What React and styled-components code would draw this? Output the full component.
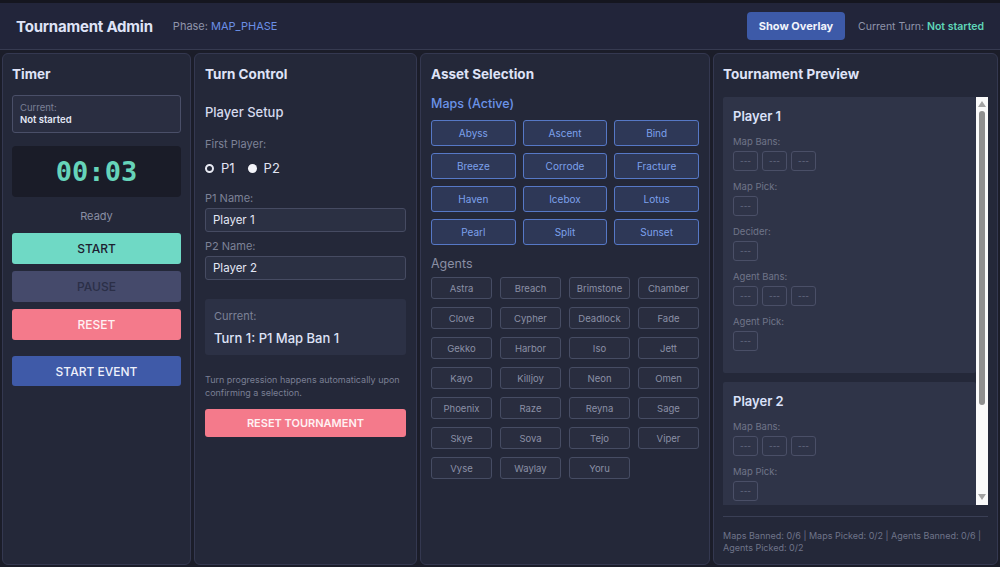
import React from "react";
import styled, { createGlobalStyle } from "styled-components";

const Global = createGlobalStyle`
  html, body { margin: 0; padding: 0; background: #1b1d29; }
  body { font-family: Inter, "Noto Sans", sans-serif; color: #dfe3f7; }
  #root { height: 567px; overflow: hidden; }
  * { box-sizing: border-box; }
`;

const Page = styled.div`
  height: 567px;
  display: flex;
  flex-direction: column;
  border-top: 3px solid #15161f;
`;

const Header = styled.header`
  height: 47px;
  flex: none;
  background: #22253a;
  border-bottom: 1px solid #363a50;
  display: flex;
  align-items: center;
  padding: 0 16px;
`;

const AppTitle = styled.h1`
  margin: 0;
  font-size: 15px;
  letter-spacing: -0.2px;
  font-weight: 700;
  color: #dfe3f7;
`;

const Meta = styled.div`
  font-size: ${(p) => p.$fs || 11}px;
  color: #8f94aa;
  margin-left: ${(p) => p.$ml || 0}px;
`;

const Accent = styled.span`
  color: ${(p) => p.$c};
  font-weight: ${(p) => p.$w || 400};
`;

const Spacer = styled.div`
  flex: 1;
`;

const OverlayButton = styled.button`
  height: 28px;
  width: 98px;
  padding: 0;
  border: none;
  border-radius: 4px;
  background: #3d5aa8;
  color: #f2f4fb;
  font-family: inherit;
  font-size: 11px;
  font-weight: 700;
  margin-right: 13px;
`;

const Grid = styled.main`
  flex: 1;
  display: grid;
  grid-template-columns: 189px 223px 290px 1fr;
  gap: 3px;
  padding: 3px 2px 2px;
  min-height: 0;
`;

const Panel = styled.section`
  background: #242839;
  border: 1px solid #343850;
  border-radius: 6px;
  padding: 12px ${(p) => p.$px || 9}px 6px;
  display: flex;
  flex-direction: column;
  min-height: 0;
  overflow: hidden;
`;

const PanelTitle = styled.h2`
  margin: 0;
  font-size: 13.5px;
  line-height: 17px;
  font-weight: 700;
  color: #dfe3f7;
`;

const CurrentBox = styled.div`
  margin-top: 12px;
  border: 1px solid #4a4f68;
  border-radius: 3px;
  background: #2a2e41;
  padding: 6px 7px;
  font-size: 9.5px;
  line-height: 12px;
`;

const SmallLabel = styled.div`
  color: #7b8096;
`;

const SmallValue = styled.div`
  color: #e4e7f5;
  font-weight: 600;
`;

const Clock = styled.div`
  margin-top: 13px;
  height: 51px;
  border-radius: 4px;
  background: #1a1c28;
  display: flex;
  align-items: center;
  justify-content: center;
  font-family: "DejaVu Sans Mono", monospace;
  font-weight: 700;
  font-size: 27px;
  color: #66d4ba;
`;

const Status = styled.div`
  margin-top: 12px;
  text-align: center;
  font-size: 11px;
  line-height: 14px;
  color: #8a8fa4;
`;

const ActionButton = styled.button`
  margin-top: ${(p) => p.$mt}px;
  height: ${(p) => p.$h || 31}px;
  width: 100%;
  border: none;
  border-radius: 3px;
  background: ${(p) => p.$bg};
  color: ${(p) => p.$fg};
  font-family: inherit;
  font-size: ${(p) => p.$fs || 12}px;
  font-weight: ${(p) => p.$fw || 500};
  flex: none;
`;

const SubTitle = styled.h3`
  margin: 21px 0 0;
  font-size: 13px;
  line-height: 17px;
  font-weight: 500;
  color: #d6daee;
`;

const FieldLabel = styled.div`
  margin-top: ${(p) => p.$mt}px;
  font-size: 11px;
  line-height: 14px;
  color: #7d8297;
`;

const RadioRow = styled.div`
  margin-top: 9px;
  display: flex;
  align-items: center;
  gap: 8px;
  height: 16px;
`;

const RadioOption = styled.label`
  display: flex;
  align-items: center;
  gap: 7px;
  font-size: 13px;
  color: #e1e4f4;
  margin-right: 5px;
`;

const RadioDot = styled.span`
  width: 9px;
  height: 9px;
  border-radius: 50%;
  background: ${(p) => (p.$on ? "#f4f5fa" : "#242839")};
  border: ${(p) => (p.$on ? "none" : "2px solid #e8eaf3")};
`;

const TextInput = styled.input`
  margin-top: 3px;
  width: 100%;
  height: 24px;
  background: #2b3043;
  border: 1px solid #464b62;
  border-radius: 3px;
  color: #e4e7f5;
  font-family: inherit;
  font-size: 11.5px;
  padding: 0 7px;
  outline: none;
`;

const TurnBox = styled.div`
  margin-top: 19px;
  height: 56px;
  background: #2c3145;
  border-radius: 3px;
  padding: 11px 9px;
`;

const TurnLabel = styled.div`
  font-size: 11px;
  line-height: 13px;
  color: #7d8297;
`;

const TurnValue = styled.div`
  margin-top: 7px;
  font-size: 13px;
  line-height: 16px;
  font-weight: 500;
  color: #dfe3f7;
`;

const Note = styled.p`
  margin: 18px 0 0;
  font-size: 9px;
  line-height: 13px;
  color: #7a7f94;
`;

const SectionLabel = styled.div`
  margin-top: ${(p) => p.$mt}px;
  font-size: 12.5px;
  line-height: 16px;
  color: ${(p) => p.$c};
  font-weight: ${(p) => p.$w || 400};
`;

const ChipGrid = styled.div`
  margin-top: ${(p) => p.$mt}px;
  display: grid;
  grid-template-columns: repeat(${(p) => p.$cols}, 1fr);
  gap: ${(p) => p.$gap}px ${(p) => p.$cgap}px;
`;

const MapChip = styled.button`
  height: 26px;
  background: #2e3857;
  border: 1px solid #5678c6;
  border-radius: 3px;
  color: #7da1ec;
  font-family: inherit;
  font-size: 10px;
  padding: 0;
`;

const AgentChip = styled.button`
  height: 22px;
  background: #292d3f;
  border: 1px solid #464c63;
  border-radius: 3px;
  color: #8b90a6;
  font-family: inherit;
  font-size: 9.5px;
  padding: 0;
`;

const PreviewFrame = styled.div`
  margin-top: 14px;
  height: 408px;
  flex: none;
  display: flex;
`;

const Viewport = styled.div`
  flex: 1;
  min-width: 0;
  overflow: hidden;
  display: flex;
  flex-direction: column;
  gap: 9px;
`;

const ScrollTrack = styled.div`
  width: 12px;
  flex: none;
  background: #fafafa;
  display: flex;
  flex-direction: column;
  align-items: center;
  padding: 4px 0 5px;
`;

const Thumb = styled.div`
  margin-top: 4px;
  width: 6px;
  height: 294px;
  border-radius: 3px;
  background: #8f8f8f;
`;

const TrackFill = styled.div`
  flex: 1;
`;

const PlayerCard = styled.div`
  flex: none;
  background: #2f3448;
  border-radius: 2px;
  padding: 11px 10px 12px;
`;

const PlayerName = styled.div`
  font-size: 13px;
  line-height: 16px;
  font-weight: 600;
  color: #dbe2fa;
  margin-bottom: 12px;
`;

const SlotLabel = styled.div`
  font-size: 9.5px;
  line-height: 12px;
  color: #6f7489;
  margin-bottom: 3px;
`;

const SlotRow = styled.div`
  display: flex;
  gap: 4px;
  margin-bottom: 10px;
`;

const Slot = styled.div`
  width: 25px;
  height: 20px;
  border: 1px solid #4a4f67;
  border-radius: 3px;
  display: flex;
  align-items: center;
  justify-content: center;
  font-size: 8px;
  color: #6d7288;
`;

const Footer = styled.div`
  margin-top: 11px;
  border-top: 1px solid #3a3f55;
  padding-top: 13px;
  font-size: 9px;
  line-height: 12px;
  color: #6f7489;
`;

const MAPS = ["Abyss", "Ascent", "Bind", "Breeze", "Corrode", "Fracture", "Haven", "Icebox", "Lotus", "Pearl", "Split", "Sunset"];
const AGENTS = ["Astra", "Breach", "Brimstone", "Chamber", "Clove", "Cypher", "Deadlock", "Fade", "Gekko", "Harbor", "Iso", "Jett", "Kayo", "Killjoy", "Neon", "Omen", "Phoenix", "Raze", "Reyna", "Sage", "Skye", "Sova", "Tejo", "Viper", "Vyse", "Waylay", "Yoru"];

const SLOT_GROUPS = [
  ["Map Bans:", 3],
  ["Map Pick:", 1],
  ["Decider:", 1],
  ["Agent Bans:", 3],
  ["Agent Pick:", 1],
];

function Player({ name }) {
  return (
    <PlayerCard>
      <PlayerName>{name}</PlayerName>
      {SLOT_GROUPS.map(([label, n]) => (
        <div key={label}>
          <SlotLabel>{label}</SlotLabel>
          <SlotRow>
            {Array.from({ length: n }).map((_, i) => (
              <Slot key={i}>---</Slot>
            ))}
          </SlotRow>
        </div>
      ))}
    </PlayerCard>
  );
}

function Arrow({ down }) {
  return (
    <svg width="8" height="6" viewBox="0 0 8 6">
      <path d={down ? "M0 0 L8 0 L4 6 Z" : "M0 6 L8 6 L4 0 Z"} fill="#a3a3a3" />
    </svg>
  );
}

export default function App() {
  return (
    <>
      <Global />
      <Page>
        <Header>
          <AppTitle>Tournament Admin</AppTitle>
          <Meta $ml={20}>
            Phase: <Accent $c="#6b8fe6">MAP_PHASE</Accent>
          </Meta>
          <Spacer />
          <OverlayButton>Show Overlay</OverlayButton>
          <Meta $fs={10.5}>
            Current Turn: <Accent $c="#5fd6b8" $w={600}>Not started</Accent>
          </Meta>
        </Header>
        <Grid>
          <Panel>
            <PanelTitle>Timer</PanelTitle>
            <CurrentBox>
              <SmallLabel>Current:</SmallLabel>
              <SmallValue>Not started</SmallValue>
            </CurrentBox>
            <Clock>00:03</Clock>
            <Status>Ready</Status>
            <ActionButton $mt={10} $bg="#6fd9c5" $fg="#1d2030">START</ActionButton>
            <ActionButton $mt={7} $bg="#454a6b" $fg="#2b2f47">PAUSE</ActionButton>
            <ActionButton $mt={7} $bg="#f47a8b" $fg="#fff1f3">RESET</ActionButton>
            <ActionButton $mt={16} $h={30} $bg="#3f5aa8" $fg="#eef1fb">START EVENT</ActionButton>
          </Panel>
          <Panel $px={10}>
            <PanelTitle>Turn Control</PanelTitle>
            <SubTitle>Player Setup</SubTitle>
            <FieldLabel $mt={16}>First Player:</FieldLabel>
            <RadioRow>
              <RadioOption>
                <RadioDot />P1
              </RadioOption>
              <RadioOption>
                <RadioDot $on />P2
              </RadioOption>
            </RadioRow>
            <FieldLabel $mt={15}>P1 Name:</FieldLabel>
            <TextInput defaultValue="Player 1" />
            <FieldLabel $mt={7}>P2 Name:</FieldLabel>
            <TextInput defaultValue="Player 2" />
            <TurnBox>
              <TurnLabel>Current:</TurnLabel>
              <TurnValue>Turn 1: P1 Map Ban 1</TurnValue>
            </TurnBox>
            <Note>Turn progression happens automatically upon confirming a selection.</Note>
            <ActionButton $mt={10} $h={28} $fs={11} $fw={600} $bg="#f47a8b" $fg="#fff1f3">
              RESET TOURNAMENT
            </ActionButton>
          </Panel>
          <Panel $px={10}>
            <PanelTitle>Asset Selection</PanelTitle>
            <SectionLabel $mt={13} $c="#6b93e8" $w={500}>Maps (Active)</SectionLabel>
            <ChipGrid $mt={8} $cols={3} $gap={7} $cgap={7}>
              {MAPS.map((m) => (
                <MapChip key={m}>{m}</MapChip>
              ))}
            </ChipGrid>
            <SectionLabel $mt={11} $c="#8a8fa4">Agents</SectionLabel>
            <ChipGrid $mt={5} $cols={4} $gap={8} $cgap={8}>
              {AGENTS.map((a) => (
                <AgentChip key={a}>{a}</AgentChip>
              ))}
            </ChipGrid>
          </Panel>
          <Panel>
            <PanelTitle>Tournament Preview</PanelTitle>
            <PreviewFrame>
              <Viewport>
                <Player name="Player 1" />
                <Player name="Player 2" />
              </Viewport>
              <ScrollTrack>
                <Arrow />
                <Thumb />
                <TrackFill />
                <Arrow down />
              </ScrollTrack>
            </PreviewFrame>
            <Footer>
              Maps Banned: 0/6 | Maps Picked: 0/2 | Agents Banned: 0/6 | Agents Picked: 0/2
            </Footer>
          </Panel>
        </Grid>
      </Page>
    </>
  );
}
